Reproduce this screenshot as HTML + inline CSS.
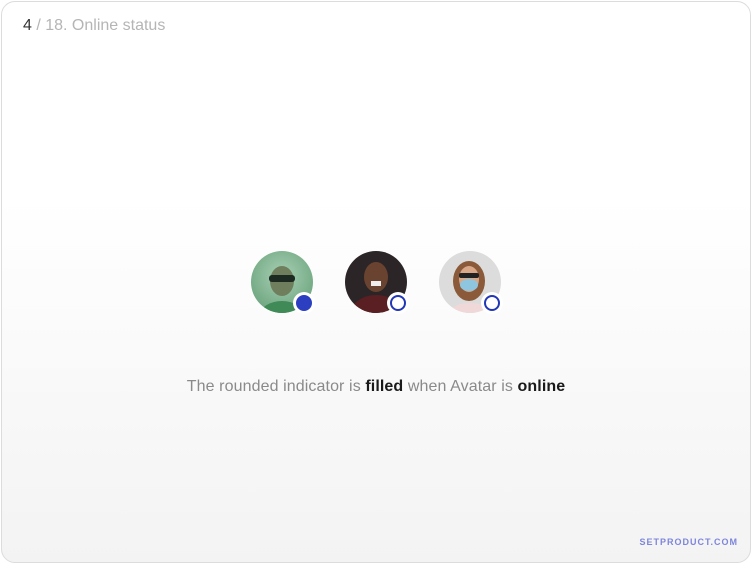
<!DOCTYPE html>
<html><head><style>
html,body{margin:0;padding:0;width:752px;height:564px;background:#fff;overflow:hidden}
.card{position:absolute;left:1px;top:1px;width:750px;height:562px;border:1px solid #dcdcdc;border-radius:14px;background:linear-gradient(#fff 0%,#fff 35%,#f3f3f3 100%);box-sizing:border-box}
.t{position:absolute;left:23px;top:17px;font:16px "Liberation Sans",sans-serif;color:#b5b5b5}
.t b{font-weight:normal;color:#333}
.av{position:absolute;top:251px;width:62px;height:62px;border-radius:50%;overflow:hidden}
.ind{position:absolute;width:22px;height:22px;border-radius:50%;background:#fff;top:292px}
.ind i{position:absolute;left:3px;top:3px;width:16px;height:16px;border-radius:50%;box-sizing:border-box;border:2px solid #2236b8}
.cap{position:absolute;top:378px;left:0;width:752px;text-align:center;font:16px "Liberation Sans",sans-serif;color:#8a8a8a;letter-spacing:0.1px}
.cap b{color:#1a1a1a;font-weight:bold}
.sp{position:absolute;right:14px;top:537px;font:bold 9px "Liberation Sans",sans-serif;letter-spacing:1px;color:#7d86db}
</style></head><body>
<div class="card"></div>
<div class="t"><b>4</b> / 18. Online status</div>
<div class="av" style="left:251px;background:radial-gradient(circle at 50% 40%,#a8d0b4,#5e9a72)">
<svg width="62" height="62"><ellipse cx="31" cy="30" rx="12" ry="15" fill="#6f7f5e"/><rect x="18" y="24" width="26" height="7" rx="3" fill="#1d2a22"/><ellipse cx="31" cy="64" rx="22" ry="14" fill="#3f8a57"/></svg></div>
<div class="av" style="left:345px;background:#2b2527">
<svg width="62" height="62"><ellipse cx="31" cy="26" rx="12" ry="15" fill="#6a4330"/><rect x="26" y="30" width="10" height="5" fill="#eee"/><ellipse cx="31" cy="64" rx="26" ry="20" fill="#5a1f22"/></svg></div>
<div class="av" style="left:439px;background:#dcdcdc">
<svg width="62" height="62"><ellipse cx="30" cy="30" rx="16" ry="20" fill="#8a5a3a"/><ellipse cx="30" cy="28" rx="10" ry="13" fill="#d8a888"/><rect x="20" y="22" width="20" height="5" rx="2" fill="#222"/><ellipse cx="30" cy="34" rx="9" ry="6" fill="#8ec6e0"/><ellipse cx="31" cy="62" rx="20" ry="10" fill="#f0d8d8"/></svg></div>
<div class="ind" style="left:293px"><i style="background:#2b3fc0;border-color:#2b3fc0"></i></div>
<div class="ind" style="left:387px"><i></i></div>
<div class="ind" style="left:481px"><i></i></div>
<div class="cap">The rounded indicator is <b>filled</b> when Avatar is <b>online</b></div>
<div class="sp">SETPRODUCT.COM</div>
</body></html>
